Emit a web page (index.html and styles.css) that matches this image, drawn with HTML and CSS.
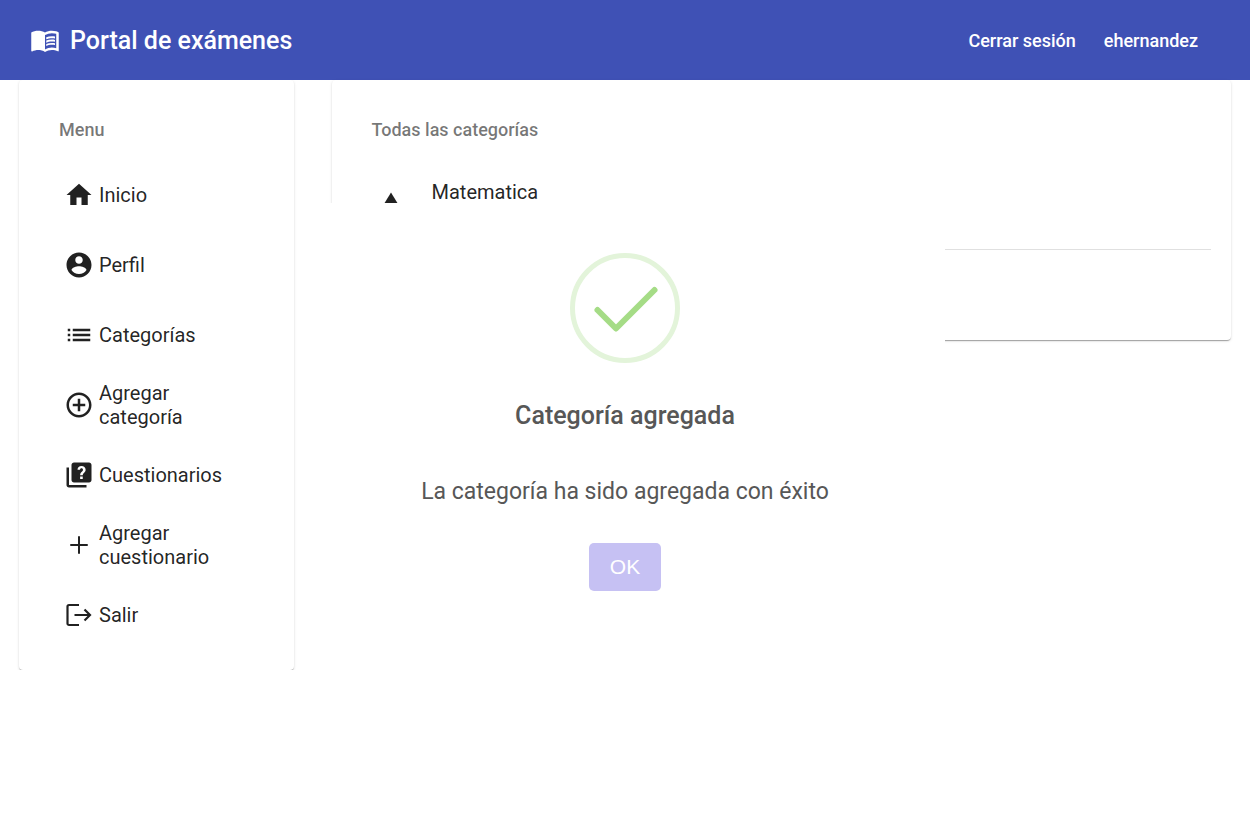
FILE: index.html
```html
<!DOCTYPE html>
<html lang="es">
<head>
<meta charset="utf-8">
<meta name="viewport" content="width=device-width, initial-scale=1">
<title>Portal de exámenes</title>
<link rel="stylesheet" href="styles.css">
</head>
<body>
<header class="toolbar">
  <a class="brand" href="#">
    <svg class="brand-icon" viewBox="0 0 24 24" aria-hidden="true"><path fill-rule="evenodd" d="M21 5c-1.11-.35-2.33-.5-3.5-.5-1.95 0-4.05.4-5.5 1.5-1.45-1.1-3.55-1.5-5.5-1.5S2.45 4.9 1 6v14.65c0 .25.25.5.5.5.1 0 .15-.05.25-.05C3.1 20.45 5.05 20 6.5 20c1.95 0 4.05.4 5.5 1.5 1.35-.85 3.8-1.5 5.5-1.5 1.65 0 3.35.3 4.75 1.05.1.05.15.05.25.05.25 0 .5-.25.5-.5V6c-.6-.45-1.25-.75-2-1zm0 13.5c-1.1-.35-2.3-.5-3.5-.5-1.7 0-4.15.65-5.5 1.5V8c1.35-.85 3.8-1.5 5.5-1.5 1.2 0 2.4.15 3.5.5v11.5z"/><path d="M17.5 10.5c.88 0 1.73.09 2.5.26V9.24c-.79-.15-1.64-.24-2.5-.24-1.7 0-3.24.29-4.5.83v1.66c1.13-.64 2.7-.99 4.5-.99zM13 12.49v1.66c1.13-.64 2.7-.99 4.5-.99.88 0 1.73.09 2.5.26V11.9c-.79-.15-1.64-.24-2.5-.24-1.7 0-3.24.3-4.5.83zM17.5 14.33c-1.7 0-3.24.29-4.5.83v1.66c1.13-.64 2.7-.99 4.5-.99.88 0 1.73.09 2.5.26v-1.52c-.79-.16-1.64-.24-2.5-.24z"/></svg>
    <span>Portal de exámenes</span>
  </a>
  <nav class="session">
    <a href="#">Cerrar sesión</a>
    <a href="#">ehernandez</a>
  </nav>
</header>

<div class="layout">
  <aside class="column column-clipped">
    <div class="card">
      <h2 class="card-title">Menu</h2>
      <nav class="menu">
        <a class="menu-item" href="#"><svg class="icon" viewBox="0 0 24 24" aria-hidden="true"><path d="M10 20v-6h4v6h5v-8h3L12 3 2 12h3v8z"/></svg><span>Inicio</span></a>
        <a class="menu-item" href="#"><svg class="icon" viewBox="0 0 24 24" aria-hidden="true"><path d="M12 2C6.48 2 2 6.48 2 12s4.48 10 10 10 10-4.48 10-10S17.52 2 12 2zm0 3c1.66 0 3 1.34 3 3s-1.34 3-3 3-3-1.34-3-3 1.34-3 3-3zm0 14.2c-2.5 0-4.71-1.28-6-3.22.03-1.99 4-3.08 6-3.08 1.99 0 5.97 1.09 6 3.08-1.29 1.94-3.5 3.22-6 3.22z"/></svg><span>Perfil</span></a>
        <a class="menu-item" href="#"><svg class="icon" viewBox="0 0 24 24" aria-hidden="true"><path d="M3 13h2v-2H3v2zm0 4h2v-2H3v2zm0-8h2V7H3v2zm4 4h14v-2H7v2zm0 4h14v-2H7v2zM7 7v2h14V7H7z"/></svg><span>Categorías</span></a>
        <a class="menu-item" href="#"><svg class="icon" viewBox="0 0 24 24" aria-hidden="true"><path d="M13 7h-2v4H7v2h4v4h2v-4h4v-2h-4V7zm-1-5C6.48 2 2 6.48 2 12s4.48 10 10 10 10-4.48 10-10S17.52 2 12 2zm0 18c-4.41 0-8-3.59-8-8s3.59-8 8-8 8 3.59 8 8-3.59 8-8 8z"/></svg><span>Agregar categoría</span></a>
        <a class="menu-item" href="#"><svg class="icon" viewBox="0 0 24 24" aria-hidden="true"><path d="M4 6H2v14c0 1.1.9 2 2 2h14v-2H4V6z"/><path fill-rule="evenodd" d="M20 2H8c-1.1 0-2 .9-2 2v12c0 1.1.9 2 2 2h12c1.1 0 2-.9 2-2V4c0-1.1-.9-2-2-2zm-7.1 13.2v-2.1h2.1v2.1zM15 12.1h-2.1c0-2.7 2.3-2.8 2.3-4.4 0-.7-.5-1.2-1.2-1.2s-1.2.5-1.2 1.2h-2C10.8 5.9 12.2 4.7 14 4.7s3.3 1.2 3.3 3c0 2.2-2.3 2.6-2.3 4.4z"/></svg><span>Cuestionarios</span></a>
        <a class="menu-item" href="#"><svg class="icon" viewBox="0 0 24 24" aria-hidden="true"><path d="M19 12.8h-6.200V19h-1.600v-6.200H5v-1.600h6.200V5h1.600v6.200H19z"/></svg><span>Agregar cuestionario</span></a>
        <a class="menu-item" href="#"><svg class="icon icon-stroke" viewBox="0 0 30 30" aria-hidden="true"><path d="M15 5H5a1.500 1.500 0 0 0-1.500 1.500v17A1.500 1.500 0 0 0 5 25h10M10.500 15H26M20.500 9.500 26 15l-5.500 5.500"/></svg><span>Salir</span></a>
      </nav>
    </div>
  </aside>

  <main class="column">
    <div class="card card-list">
      <h2 class="card-title">Todas las categorías</h2>
      <ul class="categories">
        <li class="category"><svg class="icon" viewBox="0 0 24 24" aria-hidden="true"><path d="M12 2l-5.500 9h11z"/><circle cx="17.500" cy="17.500" r="4.500"/><path d="M3 13.500h8v8H3z"/></svg><span>Matematica</span></li>
      </ul>
    </div>
  </main>
</div>

<div class="overlay">
  <section class="dialog" role="dialog" aria-modal="true" aria-labelledby="dialog-title">
    <svg class="success" viewBox="0 0 110 110" aria-hidden="true"><circle cx="55" cy="55" r="52.500"/><path d="M27.500 57 46 75.500 84.500 37"/></svg>
    <h1 class="dialog-title" id="dialog-title">Categoría agregada</h1>
    <p class="dialog-text">La categoría ha sido agregada con éxito</p>
    <button class="confirm" type="button">OK</button>
  </section>
</div>
</body>
</html>
```
FILE: styles.css
```css
* {
  box-sizing: border-box;
}

body {
  margin: 0;
  background: #fff;
  color: rgba(0, 0, 0, 0.87);
  font-family: Roboto, "Liberation Sans", sans-serif;
}

a {
  color: inherit;
  text-decoration: none;
}

.toolbar {
  display: flex;
  align-items: center;
  justify-content: space-between;
  height: 80px;
  padding: 0 52px 0 30px;
  background: #3f51b5;
  color: #fff;
}

.brand {
  display: flex;
  align-items: center;
  gap: 10px;
  font-size: 25px;
  font-weight: 500;
}

.brand-icon {
  width: 30px;
  height: 30px;
  fill: currentColor;
}

.session {
  display: flex;
  gap: 28px;
  font-size: 18px;
  font-weight: 500;
}

.layout {
  display: grid;
  grid-template-columns: 1fr 3fr;
  align-items: start;
}

.column {
  padding: 0 19px;
}

.column-clipped {
  overflow: hidden;
}

.card {
  padding: 40px;
  border-radius: 4px;
  background: #fff;
  box-shadow: 0 2px 1px -1px rgba(0, 0, 0, 0.2), 0 1px 1px 0 rgba(0, 0, 0, 0.14), 0 1px 3px 0 rgba(0, 0, 0, 0.12);
}

.column-clipped .card {
  padding-bottom: 20px;
}

.card-title {
  margin: 0 0 20px;
  color: rgba(0, 0, 0, 0.54);
  font-size: 18px;
  font-weight: 500;
  line-height: 20px;
}

.menu-item {
  display: flex;
  align-items: center;
  gap: 5px;
  height: 70px;
  padding: 0 45px 0 5px;
  font-size: 20px;
  line-height: 24px;
}

.icon {
  flex: none;
  width: 30px;
  height: 30px;
  fill: currentColor;
}

.icon-stroke {
  fill: none;
  stroke: currentColor;
  stroke-width: 2.2;
}

.card-list {
  padding: 40px 20px 90px;
}

.card-list .card-title {
  padding-left: 20px;
}

.categories {
  margin: 0;
  padding: 0;
  list-style: none;
}

.category {
  display: flex;
  gap: 26px;
  height: 90px;
  padding: 20px 24px;
  border-bottom: 1px solid rgba(0, 0, 0, 0.12);
  font-size: 20px;
  line-height: 24px;
}

.category .icon {
  margin-top: 10px;
}

.overlay {
  position: fixed;
  inset: 0;
  display: flex;
  align-items: center;
  justify-content: center;
}

.dialog {
  display: flex;
  flex-direction: column;
  align-items: center;
  width: 640px;
  max-width: 100%;
  padding: 50px 20px 32px;
  border-radius: 6px;
  background: #fff;
  color: #575757;
  text-align: center;
}

.success {
  width: 110px;
  height: 110px;
  fill: none;
  stroke: #a5dc86;
  stroke-width: 6;
  stroke-linecap: round;
  stroke-linejoin: round;
}

.success circle {
  stroke: #e3f4da;
  stroke-width: 5;
}

.dialog-title {
  margin: 37px 0 0;
  font-size: 25px;
  font-weight: 500;
  line-height: 32px;
}

.dialog-text {
  margin: 44px 0 35px;
  font-size: 23px;
  font-weight: 400;
  line-height: 32px;
}

.confirm {
  height: 48px;
  padding: 0 21px;
  border: 0;
  border-radius: 5px;
  background: #c6c1f3;
  color: #fff;
  font-family: "Liberation Sans", Arial, sans-serif;
  font-size: 21px;
}
```
